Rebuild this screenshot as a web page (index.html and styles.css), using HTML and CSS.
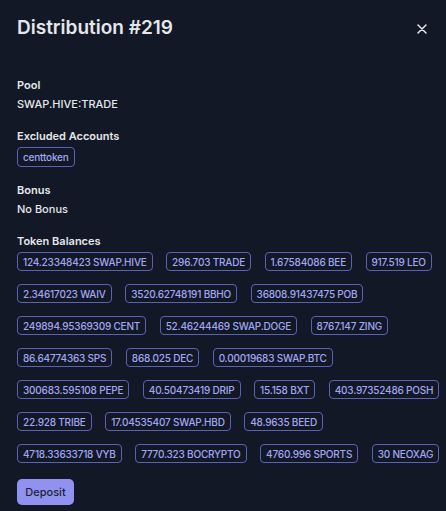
FILE: index.html
```html
<!DOCTYPE html>
<html>
<head>
<meta charset="utf-8">
<link rel="stylesheet" href="styles.css">
</head>
<body>
<div class="modal">
  <header class="header">
    <h1 class="title">Distribution #219</h1>
    <button class="close" aria-label="Close">
      <svg width="10" height="10" viewBox="0 0 10 10"><path d="M1 1L9 9M9 1L1 9" stroke="#e5e7eb" stroke-width="1.5" stroke-linecap="round"/></svg>
    </button>
  </header>
  <div class="body">
    <section class="section">
      <div class="label">Pool</div>
      <div class="value">SWAP.HIVE:TRADE</div>
    </section>
    <section class="section">
      <div class="label">Excluded Accounts</div>
      <div class="tags tags-excluded">
        <div class="tag-row"><span class="tag">centtoken</span></div>
      </div>
    </section>
    <section class="section">
      <div class="label">Bonus</div>
      <div class="value">No Bonus</div>
    </section>
    <section class="section">
      <div class="label">Token Balances</div>
      <div class="tags">
        <div class="tag-row">
          <span class="tag">124.23348423 SWAP.HIVE</span>
          <span class="tag">296.703 TRADE</span>
          <span class="tag">1.67584086 BEE</span>
          <span class="tag">917.519 LEO</span>
        </div>
        <div class="tag-row">
          <span class="tag">2.34617023 WAIV</span>
          <span class="tag">3520.62748191 BBHO</span>
          <span class="tag">36808.91437475 POB</span>
        </div>
        <div class="tag-row">
          <span class="tag">249894.95369309 CENT</span>
          <span class="tag">52.46244469 SWAP.DOGE</span>
          <span class="tag">8767.147 ZING</span>
        </div>
        <div class="tag-row">
          <span class="tag">86.64774363 SPS</span>
          <span class="tag">868.025 DEC</span>
          <span class="tag">0.00019683 SWAP.BTC</span>
        </div>
        <div class="tag-row">
          <span class="tag">300683.595108 PEPE</span>
          <span class="tag">40.50473419 DRIP</span>
          <span class="tag">15.158 BXT</span>
          <span class="tag">403.97352486 POSH</span>
        </div>
        <div class="tag-row">
          <span class="tag">22.928 TRIBE</span>
          <span class="tag">17.04535407 SWAP.HBD</span>
          <span class="tag">48.9635 BEED</span>
        </div>
        <div class="tag-row">
          <span class="tag">4718.33633718 VYB</span>
          <span class="tag">7770.323 BOCRYPTO</span>
          <span class="tag">4760.996 SPORTS</span>
          <span class="tag">30 NEOXAG</span>
        </div>
      </div>
    </section>
    <div class="footer">
      <button class="deposit">Deposit</button>
    </div>
  </div>
</div>
</body>
</html>
```
FILE: styles.css
```css
html, body {
  margin: 0;
  padding: 0;
  background: #121826;
  font-family: Inter, "Noto Sans", sans-serif;
  color: #e5e7eb;
}
.modal {
  width: 446px;
  height: 511px;
  box-sizing: border-box;
  overflow: hidden;
}
.header {
  display: flex;
  align-items: center;
  justify-content: space-between;
  padding: 14px 18px 0 17px;
  height: 28px;
}
.title {
  margin: 0;
  font-size: 19px;
  line-height: 28px;
  font-weight: 600;
  color: #e5e7eb;
}
.close {
  background: none;
  border: 0;
  padding: 0;
  width: 12px;
  height: 12px;
  display: flex;
  align-items: center;
  justify-content: center;
  margin-top: 1px;
}
.body {
  padding: 34px 0 0 17px;
  display: flex;
  flex-direction: column;
  gap: 14px;
}
.section {
  display: flex;
  flex-direction: column;
}
.label {
  font-size: 11px;
  line-height: 18px;
  font-weight: 600;
  color: #e5e7eb;
}
.value {
  font-size: 11px;
  line-height: 18px;
  font-weight: 500;
  color: #e5e7eb;
  margin-top: 1px;
}
.tags {
  display: flex;
  flex-direction: column;
  row-gap: 13px;
  margin-top: 2px;
}
.tag-row {
  display: flex;
  column-gap: 13.5px;
}
.tag {
  display: inline-flex;
  align-items: center;
  height: 19px;
  box-sizing: border-box;
  padding: 0 5px;
  border: 1px solid #5d61b5;
  border-radius: 4px;
  font-size: 10px;
  font-weight: 500;
  letter-spacing: -0.2px;
  color: #a3a7f2;
  white-space: nowrap;
}
.tags-excluded .tag {
  height: 20px;
}
.footer {
  padding-top: 2px;
}
.deposit {
  background: #9192f0;
  border: 0;
  border-radius: 5px;
  width: 57px;
  height: 26px;
  padding: 0;
  font-family: Inter, "Noto Sans", sans-serif;
  font-size: 11px;
  font-weight: 500;
  color: #1c1f3a;
}
```
